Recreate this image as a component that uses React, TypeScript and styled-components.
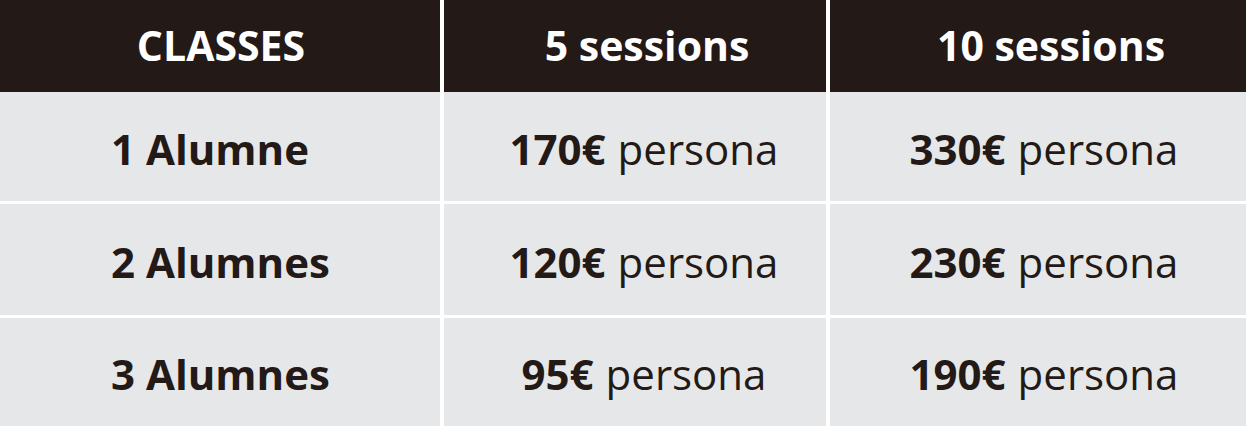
import React from 'react';
import styled, { createGlobalStyle } from 'styled-components';

const GlobalStyle = createGlobalStyle`
    body {
        margin: 0;
        background: #fff;
        font-family: "Open Sans", "Liberation Sans", sans-serif;
    }
`;

const Table = styled.div`
    width: 1246px;
    height: 426px;
    display: flex;
    flex-direction: column;
    background: #fff;
    overflow: hidden;
`;

const Row = styled.div<{ $height: number }>`
    display: grid;
    grid-template-columns: 440px 382px 416px;
    column-gap: 4px;
    height: ${p => p.$height}px;
    flex-shrink: 0;
`;

const Body = styled.div`
    display: flex;
    flex-direction: column;
    gap: 3px;
`;

const HeadCell = styled.div<{ $shift: number }>`
    background: #231916;
    color: #fff;
    font-weight: 700;
    font-size: 41px;
    display: flex;
    align-items: center;
    justify-content: center;
    padding-left: ${p => p.$shift}px;
    padding-bottom: 2px;
`;

const Cell = styled.div<{ $shift: number; $left?: boolean }>`
    background: #e6e7e8;
    color: #231916;
    font-size: 42px;
    display: flex;
    align-items: center;
    justify-content: ${p => (p.$left ? 'flex-start' : 'center')};
    padding-left: ${p => p.$shift}px;
    padding-top: 3px;
`;

const Strong = styled.b`
    font-weight: 700;
    margin-right: 12px;
`;

const rows = [
    { name: '1 Alumne', five: '170€', ten: '330€', h: 109 },
    { name: '2 Alumnes', five: '120€', ten: '230€', h: 111 },
    { name: '3 Alumnes', five: '95€', ten: '190€', h: 108 },
];

const App = () => (
    <>
        <GlobalStyle />
        <Table>
            <Row $height={92}>
                <HeadCell $shift={2}>CLASSES</HeadCell>
                <HeadCell $shift={24}>5 sessions</HeadCell>
                <HeadCell $shift={26}>10 sessions</HeadCell>
            </Row>
            <Body>
                {rows.map(r => (
                    <Row key={r.name} $height={r.h}>
                        <Cell $shift={111} $left>
                            <Strong>{r.name}</Strong>
                        </Cell>
                        <Cell $shift={18}>
                            <Strong>{r.five}</Strong>persona
                        </Cell>
                        <Cell $shift={12}>
                            <Strong>{r.ten}</Strong>persona
                        </Cell>
                    </Row>
                ))}
            </Body>
        </Table>
    </>
);

export default App;
